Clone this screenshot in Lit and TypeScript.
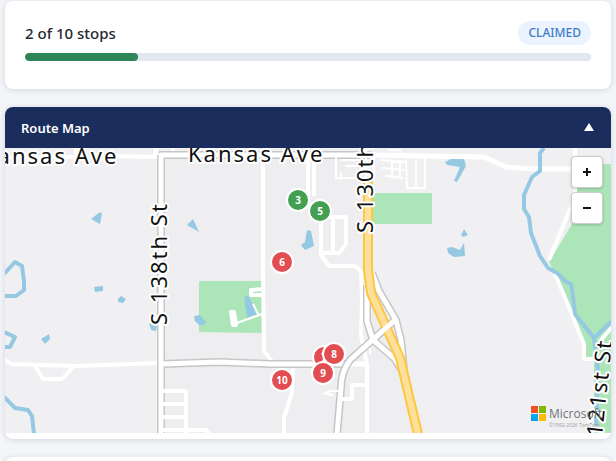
import { LitElement, html, svg, css } from "lit";
import { customElement, state } from "lit/decorators.js";
import { classMap } from "lit/directives/class-map.js";
import { styleMap } from "lit/directives/style-map.js";

interface Stop {
  label: string;
  x: number;
  y: number;
  done: boolean;
}

const STOPS: Stop[] = [
  { label: "3", x: 293, y: 52, done: true },
  { label: "5", x: 315, y: 63, done: true },
  { label: "6", x: 277, y: 114, done: false },
  { label: "7", x: 319, y: 209, done: false },
  { label: "8", x: 329, y: 206, done: false },
  { label: "9", x: 318, y: 225, done: false },
  { label: "10", x: 277, y: 232, done: false },
];

@customElement("map-tiles")
export class MapTiles extends LitElement {
  static styles = css`
    :host { display: block; height: 100%; background: #f0f0f3; }
    .tiles { display: block; width: 100%; height: 100%; }
    .shade { fill: #eeeef0; }
    .park { fill: #ace6b8; }
    .water { fill: #95c8e3; }
    .river, .case, .road, .lane, .hwy-case, .hwy { fill: none; stroke-linejoin: round; }
    .river { stroke: #95c8e3; stroke-width: 4; }
    .case { stroke: #c6c6c6; stroke-width: 8; }
    .road { stroke: #fff; stroke-width: 5; }
    .lane { stroke: #fff; stroke-width: 4; }
    .thin { stroke-width: 2; }
    .hwy-case { stroke: #fdc740; stroke-width: 10; }
    .hwy { stroke: #fee09b; stroke-width: 6; }
    .name {
      font: 400 22px "Noto Sans", "Open Sans", sans-serif;
      letter-spacing: 2px;
      fill: #111;
      stroke: #fff;
      stroke-width: 4;
      stroke-linejoin: round;
      paint-order: stroke;
    }
    .brand { font: 400 12px "Open Sans", sans-serif; fill: #737373; }
    .legal { font: 400 5px "Open Sans", sans-serif; fill: #999; }
  `;

  render() {
    return html`<svg class="tiles" role="img" aria-label="Street map">
      ${svg`<g transform="translate(-5 -148)">
        <path class="shade" d="M162 156H366V260L420 433H162Z" />
        <path class="park" d="M199 281H263V333L199 332Z" />
        <path class="park" d="M367 193H432V224H367Z" />
        <path class="park" d="M576 164H1400V433H594V359H584V344L566 300L555 274L549 262L572 224Z" />

        <path class="water" d="M91 219L100 212L102 214L100 224ZM94 287L103 286L103 291L95 292ZM118 299L121 296L126 299L123 303L118 302ZM41 339L49 334L50 339L45 344ZM187 225L193 219L199 232ZM149 323L157 325L156 331L151 330ZM194 316L200 315L206 322L204 325L199 325L195 321ZM244 297L248 295L258 314L247 318Z" />
        <path class="water" d="M301 245L305 242L307 230L311 231L314 246L305 250ZM445 162L453 158L464 159L466 166L457 182L454 181L460 167L447 165ZM461 235L464 229L468 235L463 237ZM447 248L452 247L460 250L464 243L465 256L454 257L448 253Z" />
        <path class="river" d="M4 274L15 262L22 266L24 281L24 290L16 296H4M4 332L15 337L10 347H4M4 397L15 408L28 410L32 416L34 434" />

        <path class="lane" d="M76 148V157H4M110 156L160 157M4 360L12 364L75 366L160 363" />
        <path class="lane" d="M35 366L43 379H62L73 367" />
        <path class="lane" d="M173 148V155M263 158V277L264 351L274 364M293 364L292 392L284 418V434" />
        <path class="case" d="M161 434V155H372M162 364L220 362L270 364H345" />
        <path class="road" d="M161 434V155H372M162 364L220 362L270 364H366M156 148V155" />
        <path class="road" d="M366 155L484 157L506 167L535 169H575" />
        <path class="lane" d="M575 148V197L549 260M555 274L566 300L584 344V359H596M612 327L601 340" />
        <path class="river" d="M544 148L540 153V171L532 177L524 195V209L529 217L531 233L540 256L548 268L557 273L565 281L571 284L573 296L575 314L594 338L598 370L596 434M594 338L612 321" />
        <path class="lane" d="M162 391H186M162 404H186M162 417H186M162 430H206L210 434M186 390V434" />
        <path class="lane" d="M265 289L251 290V295H264" />
        <path class="lane thin" d="M234 324L262 314M253 304L259 316" />
        <path class="lane" d="M231 312H234L236 325H233Z" />

        <path class="lane" d="M308 156V196M314 156V196" />
        <path class="lane" d="M321 210V255L329 266H355L361 271L362 300L361 335L367 365V434M322 217H346V244L339 253H323M333 218V253" />
        <path class="lane thin" d="M336 156V178H365M341 160H368M345 166H368M380 160L405 162M382 168L405 170M385 176L403 178M392 160V178M400 160V178M406 160L407 188M406 188H425V158M416 160V186M341 180V172M366 148V180M374 152V174M388 150H400V158" />

        <path class="case" d="M372 273L379 291L396 320L401 340L404 370M367 285V321L373 340L394 358L403 372M395 320L350 360Q341 372 341 388L337 434" />
        <path class="road" d="M372 273L379 291L396 320L401 340L404 370M367 285V321L373 340L394 358L403 372M395 320L350 360Q341 372 341 388L337 434" />
        <path class="hwy-case" d="M368 180V270L371 293L400 358L418 434" />
        <path class="hwy" d="M368 180V270L371 293L400 358L418 434" />
        <path class="road" d="M395 320L360 351" />
        <path class="lane" d="M342 399H352V385H365" />
        <path class="lane thin" d="M323 394L330 391H340M326 394L333 395M370 348V354" />

        <text class="name" x="-18" y="164">Kansas Ave</text>
        <text class="name" x="188" y="162">Kansas Ave</text>
        <text class="name" transform="translate(167 325) rotate(-90)">S 138th St</text>
        <text class="name" transform="translate(373 233) rotate(-90)">S 130th St</text>
        <text class="name" transform="translate(602 437) rotate(-84)">121st St</text>

        <path fill="#f25022" d="M531 406H538V413H531Z" />
        <path fill="#7fba00" d="M539 406H546V413H539Z" />
        <path fill="#00a4ef" d="M531 414H538V421H531Z" />
        <path fill="#ffb900" d="M539 414H546V421H539Z" />
        <text class="brand" x="549" y="418">Microsoft</text>
        <text class="legal" x="549" y="427">©1992-2026 TomTom</text>
      </g>`}
    </svg>`;
  }
}

@customElement("app-root")
export class AppRoot extends LitElement {
  @state() private open = true;

  static styles = css`
    :host {
      display: flex;
      flex-direction: column;
      gap: 18px;
      box-sizing: border-box;
      height: 100vh;
      overflow: hidden;
      padding: 1px 5px 0;
      background: #f3f5f9;
      font-family: "Noto Sans", "Open Sans", sans-serif;
      color: #24272c;
    }
    .card {
      flex: none;
      background: #fff;
      border-radius: 8px;
      box-shadow: 0 1px 6px rgba(20, 30, 60, 0.14);
      overflow: hidden;
    }
    .progress { box-sizing: border-box; height: 88px; padding: 20px; }
    .row {
      display: flex;
      align-items: center;
      justify-content: space-between;
      height: 24px;
      margin-bottom: 8px;
    }
    .count { font-size: 15px; font-weight: 500; }
    .badge {
      padding: 0 10px;
      border-radius: 12px;
      background: #ebf3ff;
      color: #3f7cc6;
      font-size: 12px;
      font-weight: 500;
      line-height: 24px;
    }
    .track { height: 8px; border-radius: 4px; background: #e2e7ef; overflow: hidden; }
    .fill { height: 100%; border-radius: 4px; background: #2f855a; }
    .head {
      display: flex;
      align-items: center;
      justify-content: space-between;
      width: 100%;
      height: 41px;
      padding: 0 16px;
      border: 0;
      background: #1b2d5c;
      color: #fff;
      font: 600 13px "Noto Sans", "Open Sans", sans-serif;
      cursor: pointer;
    }
    .arrow { display: block; fill: #fff; }
    .closed { transform: rotate(180deg); }
    .map { position: relative; height: 285px; margin-bottom: 6px; overflow: hidden; }
    .pin {
      position: absolute;
      box-sizing: border-box;
      width: 24px;
      height: 24px;
      padding: 0;
      transform: translate(-50%, -50%);
      border: 2px solid #fff;
      border-radius: 50%;
      background: #e24d52;
      color: #fff;
      font: 700 10px "Noto Sans", "Open Sans", sans-serif;
    }
    .done { background: #43a053; }
    .zoom {
      position: absolute;
      top: 8px;
      right: 8px;
      display: flex;
      flex-direction: column;
      gap: 4px;
    }
    .zoom button {
      display: grid;
      place-items: center;
      width: 32px;
      height: 32px;
      padding: 0;
      border: 1px solid #ccc;
      border-radius: 4px;
      background: #fff;
      box-shadow: 0 1px 3px rgba(0, 0, 0, 0.2);
    }
    .zoom path { stroke: #111; stroke-width: 2; }
    .next { height: 60px; }
  `;

  render() {
    const done = 2;
    const total = 10;
    return html`
      <section class="card progress">
        <div class="row">
          <span class="count">${done} of ${total} stops</span>
          <span class="badge">CLAIMED</span>
        </div>
        <div class="track" role="progressbar" aria-label="Stops completed" aria-valuemin="0" aria-valuemax=${total} aria-valuenow=${done}>
          <div class="fill" style=${styleMap({ width: `${(done / total) * 100}%` })}></div>
        </div>
      </section>
      <section class="card">
        <button class="head" aria-expanded=${this.open} @click=${() => (this.open = !this.open)}>
          <span>Route Map</span>
          <svg class=${classMap({ arrow: true, closed: !this.open })} width="12" height="10" aria-hidden="true"><path d="M6 0L11 8H1Z" /></svg>
        </button>
        ${this.open
          ? html`<div class="map">
              <map-tiles></map-tiles>
              ${STOPS.map(
                (s) => html`<button
                  class=${classMap({ pin: true, done: s.done })}
                  style=${styleMap({ left: `${s.x}px`, top: `${s.y}px` })}
                >${s.label}</button>`
              )}
              <div class="zoom">
                <button aria-label="Zoom in"><svg width="10" height="10"><path d="M1 5H9M5 1V9" /></svg></button>
                <button aria-label="Zoom out"><svg width="10" height="10"><path d="M1 5H9" /></svg></button>
              </div>
            </div>`
          : null}
      </section>
      <section class="card next"></section>
    `;
  }
}
